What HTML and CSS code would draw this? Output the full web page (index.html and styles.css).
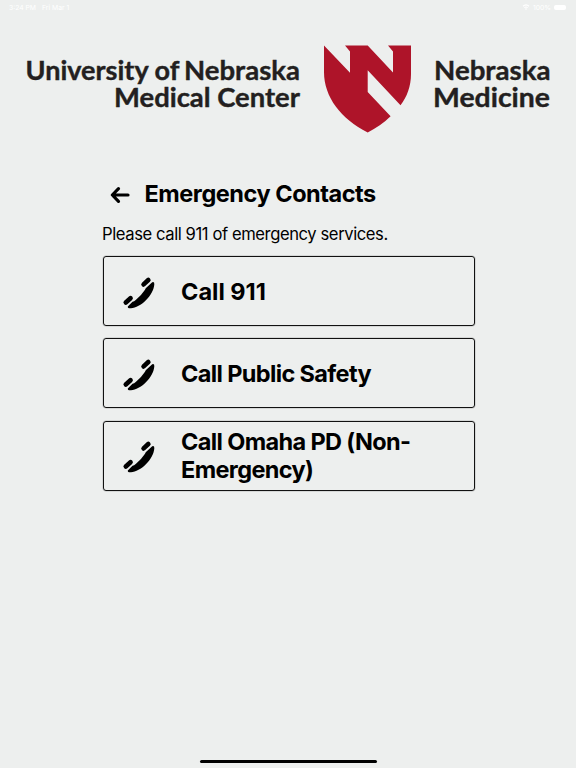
FILE: index.html
```
<!DOCTYPE html>
<html lang="en">
<head>
    <meta charset="UTF-8">
    <meta name="viewport" content="width=device-width, initial-scale=1.0">
    <title>Emergency Contacts</title>
    <link rel="stylesheet" href="styles.css">
</head>
<body>
    <div class="status-bar">
        <span class="time">3:24 PM</span>
        <span class="date">Fri Mar 1</span>
        <svg class="wifi" viewBox="0 0 10 8" width="8" height="6">
            <path d="M1 3Q5 -0.6 9 3M2.8 4.9Q5 3 7.2 4.9" fill="none" stroke="#fff" stroke-width="1.5"/>
            <circle cx="5" cy="6.7" r="1.1" fill="#fff"/>
        </svg>
        <span class="percent">100%</span>
        <span class="battery"></span>
    </div>

    <!-- Logo -->
    <svg class="logo" viewBox="0 0 576 104" width="576" height="104">
        <g class="logo-text">
            <text x="25.5" y="44" textLength="154" lengthAdjust="spacingAndGlyphs">University of</text>
            <text x="184" y="44" textLength="116" lengthAdjust="spacingAndGlyphs">Nebraska</text>
            <text x="114" y="71" textLength="186" lengthAdjust="spacingAndGlyphs">Medical Center</text>
            <text x="434" y="44" textLength="116.5" lengthAdjust="spacingAndGlyphs">Nebraska</text>
            <text x="433" y="71" textLength="117" lengthAdjust="spacingAndGlyphs">Medicine</text>
        </g>
        <path fill="#ae1429" d="M324 9.5L350 36.7V15.5L345 9.5H367.7L393 36.5V15.5L388 9.5H411V38C411 50 407 61 400.5 69.3L367.7 34.3V56L390.6 80.2C384 87 376 92 367.7 96.5C341 83 324 61 324 36Z"/>
    </svg>

    <div class="content">
        <div class="header">
            <svg class="back" viewBox="0 0 20 18" width="20" height="18">
                <path d="M8.5 2.7L2.3 9L8.5 15.3M2.5 9H18" fill="none" stroke="#000" stroke-width="3.2" stroke-linecap="round" stroke-linejoin="round"/>
            </svg>
            <h1>Emergency Contacts</h1>
        </div>
        <p class="note">Please call 911 of emergency services.</p>

        <svg class="defs" width="0" height="0">
            <symbol id="phone" viewBox="0 0 34 34">
                <path d="M30.2 6.2Q32.6 5 32.3 8.5C31.4 19.4 18.7 31.7 9 32.3Q5.4 32.5 5.8 30.4L10.5 25.7Q12 25.6 14 23.8Q19.5 19 23 13.7Q23.7 12.4 24 12Z"/>
                <path d="M21.6 8.4L26.3 4M3.8 26.5L8.5 22.2" fill="none" stroke="#000" stroke-width="4.7" stroke-linecap="round"/>
            </symbol>
        </svg>

        <div class="contact">
            <svg class="phone"><use href="#phone"/></svg>
            <span class="label label-number">Call 911</span>
        </div>
        <div class="contact">
            <svg class="phone"><use href="#phone"/></svg>
            <span class="label">Call Public Safety</span>
        </div>
        <div class="contact">
            <svg class="phone"><use href="#phone"/></svg>
            <span class="label">Call Omaha PD (Non-Emergency)</span>
        </div>
    </div>

    <div class="home-bar"></div>
</body>
</html>
```

FILE: styles.css
```
* {
    box-sizing: border-box;
}
body {
    font-family: Inter, "Liberation Sans", sans-serif;
    margin: 0;
    height: 768px;
    background-color: #edefee;
    color: #000;
    display: flex;
    flex-direction: column;
    overflow: hidden;
}
.status-bar {
    display: flex;
    align-items: center;
    height: 14px;
    margin-bottom: 22px;
    padding: 0 10px 0 9px;
    color: #fff;
    font-size: 6.8px;
    white-space: nowrap;
}
.date {
    margin-left: 6px;
}
.wifi {
    margin-left: auto;
}
.percent {
    margin: 0 3px;
}
.battery {
    width: 12px;
    height: 5px;
    border-radius: 2px;
    background-color: #fff;
}
.logo {
    display: block;
    flex: none;
}
.logo-text {
    font-family: Lato, sans-serif;
    font-size: 27.5px;
    font-weight: 700;
    fill: #231f20;
    stroke: #231f20;
    stroke-width: 0.4px;
}
.content {
    width: 372px;
    margin-left: 103px;
    padding-top: 39px;
}
.header {
    display: flex;
    align-items: center;
    height: 30px;
}
.back {
    margin: 1px 14.5px 0 7px;
}
h1 {
    margin: 0;
    font-size: 23.5px;
    font-weight: 700;
    line-height: 30px;
    letter-spacing: -0.46px;
    white-space: nowrap;
}
.note {
    margin: 14px 0 11px -1px;
    font-size: 16.6px;
    line-height: 22px;
    letter-spacing: -0.41px;
    white-space: nowrap;
}
.defs {
    display: block;
}
.contact {
    display: flex;
    align-items: center;
    height: 70px;
    margin-bottom: 12.3px;
    padding-left: 18px;
    border: 1px solid #111;
    border-radius: 3px;
    box-shadow: 0 0 0 0.5px rgba(0, 0, 0, 0.2);
}
.phone {
    flex: none;
    width: 34px;
    height: 34px;
    margin: 3px 25px 0 0;
}
.label {
    width: 250px;
    padding-top: 1px;
    font-size: 23.5px;
    font-weight: 700;
    line-height: 28.5px;
    letter-spacing: -0.63px;
}
.label-number {
    padding-top: 2px;
    letter-spacing: 0;
}
.home-bar {
    width: 177px;
    height: 3px;
    margin: auto auto 5px;
    border-radius: 2px;
    background-color: #000;
}
```
